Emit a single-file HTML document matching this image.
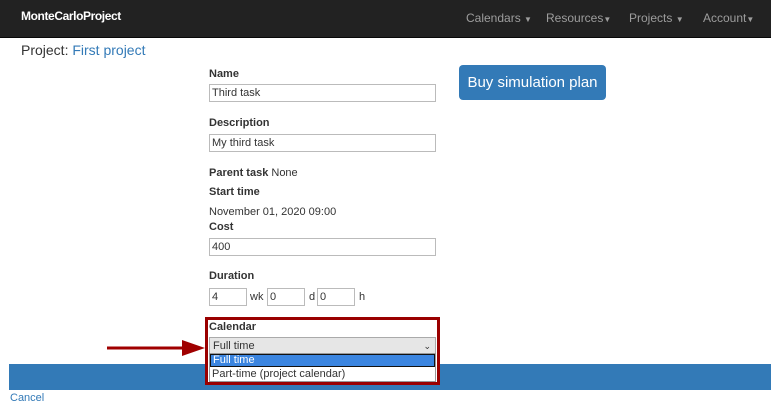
<!DOCTYPE html>
<html><head><style>
body{margin:0;width:771px;height:419px;overflow:hidden;background:#fff;font-family:"Liberation Sans",sans-serif;position:relative;color:#333}
div,span{position:absolute}
.nav{left:0;top:0;width:771px;height:37px;background:#222;border-bottom:1px solid #080808}
.ni{color:#9d9d9d;font-size:12px;top:11px}
.ni b{font-size:8px;font-weight:normal}
.lb{left:209px;font-size:11px;font-weight:bold;color:#333}
.in{border:1px solid #bbb;height:17px;font-size:11px;line-height:17px;padding-left:2px;box-sizing:border-box;color:#333;background:#fff}
.tx{font-size:11px;color:#333}
</style></head><body>
<div class="nav"></div>
<div style="left:21px;top:9px;color:#fff;font-weight:bold;font-size:12px;letter-spacing:-0.4px">MonteCarloProject</div>
<div class="ni" style="left:466px">Calendars <b>▼</b></div>
<div class="ni" style="left:546px">Resources<b>▼</b></div>
<div class="ni" style="left:629px">Projects <b>▼</b></div>
<div class="ni" style="left:703px">Account<b>▼</b></div>
<div style="left:21px;top:42px;font-size:14px;color:#333">Project: <span style="position:static;color:#337ab7">First project</span></div>

<div class="lb" style="top:68px">Name</div>
<div class="in" style="left:209px;top:84px;width:227px;height:18px">Third task</div>
<div class="lb" style="top:117px">Description</div>
<div class="in" style="left:209px;top:134px;width:227px;height:18px">My third task</div>
<div class="lb" style="top:167px">Parent task <span style="position:static;font-weight:normal">None</span></div>
<div class="lb" style="top:186px">Start time</div>
<div class="tx" style="left:209px;top:206px">November 01, 2020 09:00</div>
<div class="lb" style="top:221px">Cost</div>
<div class="in" style="left:209px;top:238px;width:227px;height:18px">400</div>
<div class="lb" style="top:270px">Duration</div>
<div class="in" style="left:209px;top:288px;width:38px;height:18px">4</div>
<div class="tx" style="left:250px;top:291px">wk</div>
<div class="in" style="left:267px;top:288px;width:38px;height:18px">0</div>
<div class="tx" style="left:309px;top:291px">d</div>
<div class="in" style="left:317px;top:288px;width:38px;height:18px">0</div>
<div class="tx" style="left:359px;top:291px">h</div>

<div style="left:459px;top:65px;width:147px;height:35px;background:#337ab7;border-radius:4px;color:#fff;font-size:15px;line-height:35px;text-align:center">Buy simulation plan</div>

<div style="left:9px;top:364px;width:762px;height:26px;background:#337ab7"></div>
<div style="left:10px;top:392px;font-size:11px;color:#337ab7">Cancel</div>

<div style="left:205px;top:317px;width:229px;height:62px;border:3px solid #9a0000;background:#fff"></div>
<div class="lb" style="top:321px">Calendar</div>
<div style="left:209px;top:337px;width:227px;height:17px;background:#e6e6e6;border:1px solid #aaa;box-sizing:border-box;font-size:11px;line-height:16px;padding-left:3px">Full time<span style="right:4px;top:0;font-size:9px">⌄</span></div>
<div style="left:209px;top:353px;width:227px;height:29px;background:#fff;border:1px solid #999;box-sizing:border-box"></div>
<div style="left:210px;top:354px;width:225px;height:13px;background:#3b85e0;border:1px solid #111;box-sizing:border-box;color:#fff;font-size:11px;line-height:11px;padding-left:2px">Full time</div>
<div class="tx" style="left:212px;top:368px">Part-time (project calendar)</div>

<svg style="position:absolute;left:100px;top:336px" width="110" height="24"><line x1="7" y1="12" x2="86" y2="12" stroke="#a00000" stroke-width="3"/><polygon points="82,4 105,12 82,20" fill="#a00000"/></svg>
</body></html>
